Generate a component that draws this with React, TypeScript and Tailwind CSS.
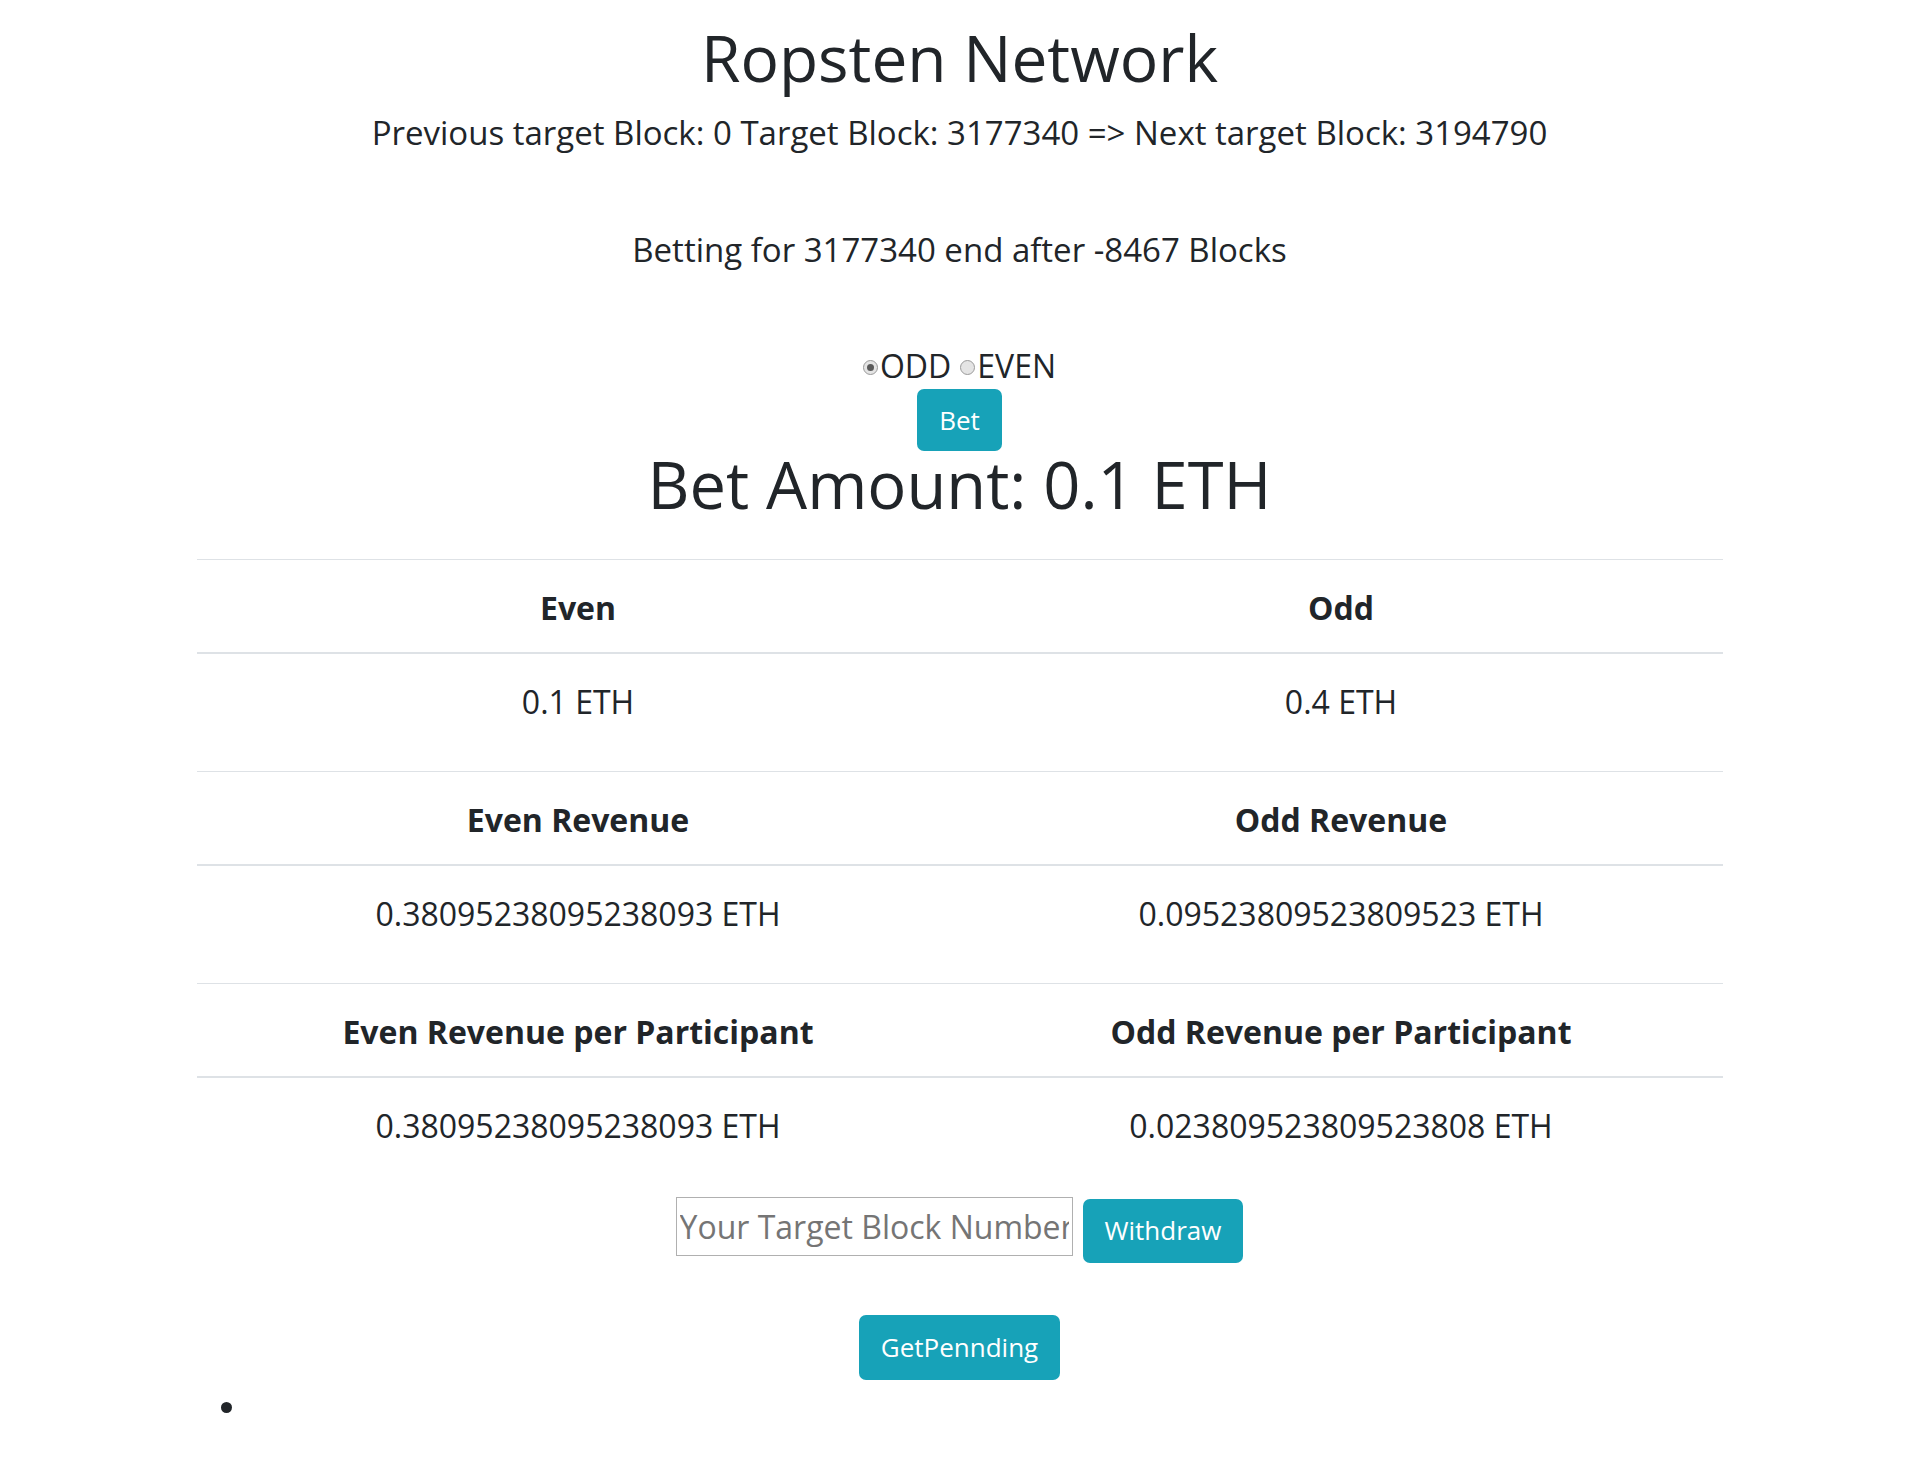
import React from "react";

function Radio({ checked }: { checked?: boolean }) {
  return (
    <span className="inline-flex h-[15px] w-[15px] items-center justify-center rounded-full border border-[#9a9a9a] bg-[#e4e4e4]">
      {checked ? <span className="h-[7px] w-[7px] rounded-full bg-[#5a5a5a]" /> : null}
    </span>
  );
}

export default function App() {
  const rows: [string, string, string, string][] = [
    ["Even", "Odd", "0.1 ETH", "0.4 ETH"],
    ["Even Revenue", "Odd Revenue", "0.38095238095238093 ETH", "0.09523809523809523 ETH"],
    [
      "Even Revenue per Participant",
      "Odd Revenue per Participant",
      "0.38095238095238093 ETH",
      "0.023809523809523808 ETH",
    ],
  ];
  return (
    <div className="min-h-[1457px] bg-white text-[#212529] font-['Open_Sans',sans-serif]">
      <h1 className="pt-[19px] text-center text-[64px] font-normal leading-[77px]">Ropsten Network</h1>
      <p className="mt-[14px] text-center text-[33px] leading-[45px]">
        Previous target Block: 0 Target Block: 3177340 =&gt; Next target Block: 3194790
      </p>
      <p className="mt-[72px] text-center text-[33px] leading-[45px]">Betting for 3177340 end after -8467 Blocks</p>
      <div className="mt-[71px] flex items-center justify-center text-[32px] leading-[45px]">
        <span className="mt-[3px] flex">
          <Radio checked />
        </span>
        <span className="ml-[2px]">ODD</span>
        <span className="ml-[9px] mt-[3px] flex">
          <Radio />
        </span>
        <span className="ml-[2px]">EVEN</span>
      </div>
      <div className="flex justify-center">
        <button className="mt-[1px] h-[62px] rounded-[7px] bg-[#17a2b8] px-[22px] text-[26px] text-white">Bet</button>
      </div>
      <h1 className="text-center text-[65px] font-normal leading-[66px]">Bet Amount: 0.1 ETH</h1>
      <div className="mx-auto mt-[42px] w-[1526px]">
        <table className="w-full table-fixed border-collapse text-center text-[32px]">
          <tbody>
            {rows.map((r, i) => (
              <React.Fragment key={i}>
                <tr className="border-t border-b-2 border-t-[#dee2e6] border-b-[#dee2e6]">
                  <th className="h-[93px] pt-[4px] font-bold leading-[45px]">{r[0]}</th>
                  <th className="h-[93px] pt-[4px] font-bold leading-[45px]">{r[1]}</th>
                </tr>
                <tr>
                  <td className="h-[119px] pt-[25px] align-top leading-[45px]">{r[2]}</td>
                  <td className="h-[119px] pt-[25px] align-top leading-[45px]">{r[3]}</td>
                </tr>
              </React.Fragment>
            ))}
          </tbody>
        </table>
      </div>
      <div className="mt-[1px] flex items-start justify-center">
        <input
          className="h-[59px] w-[397px] border border-[#b0b0b0] px-[3px] text-[32px] outline-none placeholder:text-[#757575]"
          placeholder="Your Target Block Number"
        />
        <button className="ml-[10px] mt-[2px] h-[64px] rounded-[7px] bg-[#17a2b8] px-[22px] text-[26px] text-white">
          Withdraw
        </button>
      </div>
      <div className="mt-[52px] flex justify-center">
        <button className="h-[65px] rounded-[7px] bg-[#17a2b8] px-[22px] text-[26px] text-white">GetPennding</button>
      </div>
      <div className="mt-[22px] pl-[221px]">
        <span className="block h-[11px] w-[11px] rounded-full bg-[#212529]" />
      </div>
    </div>
  );
}
